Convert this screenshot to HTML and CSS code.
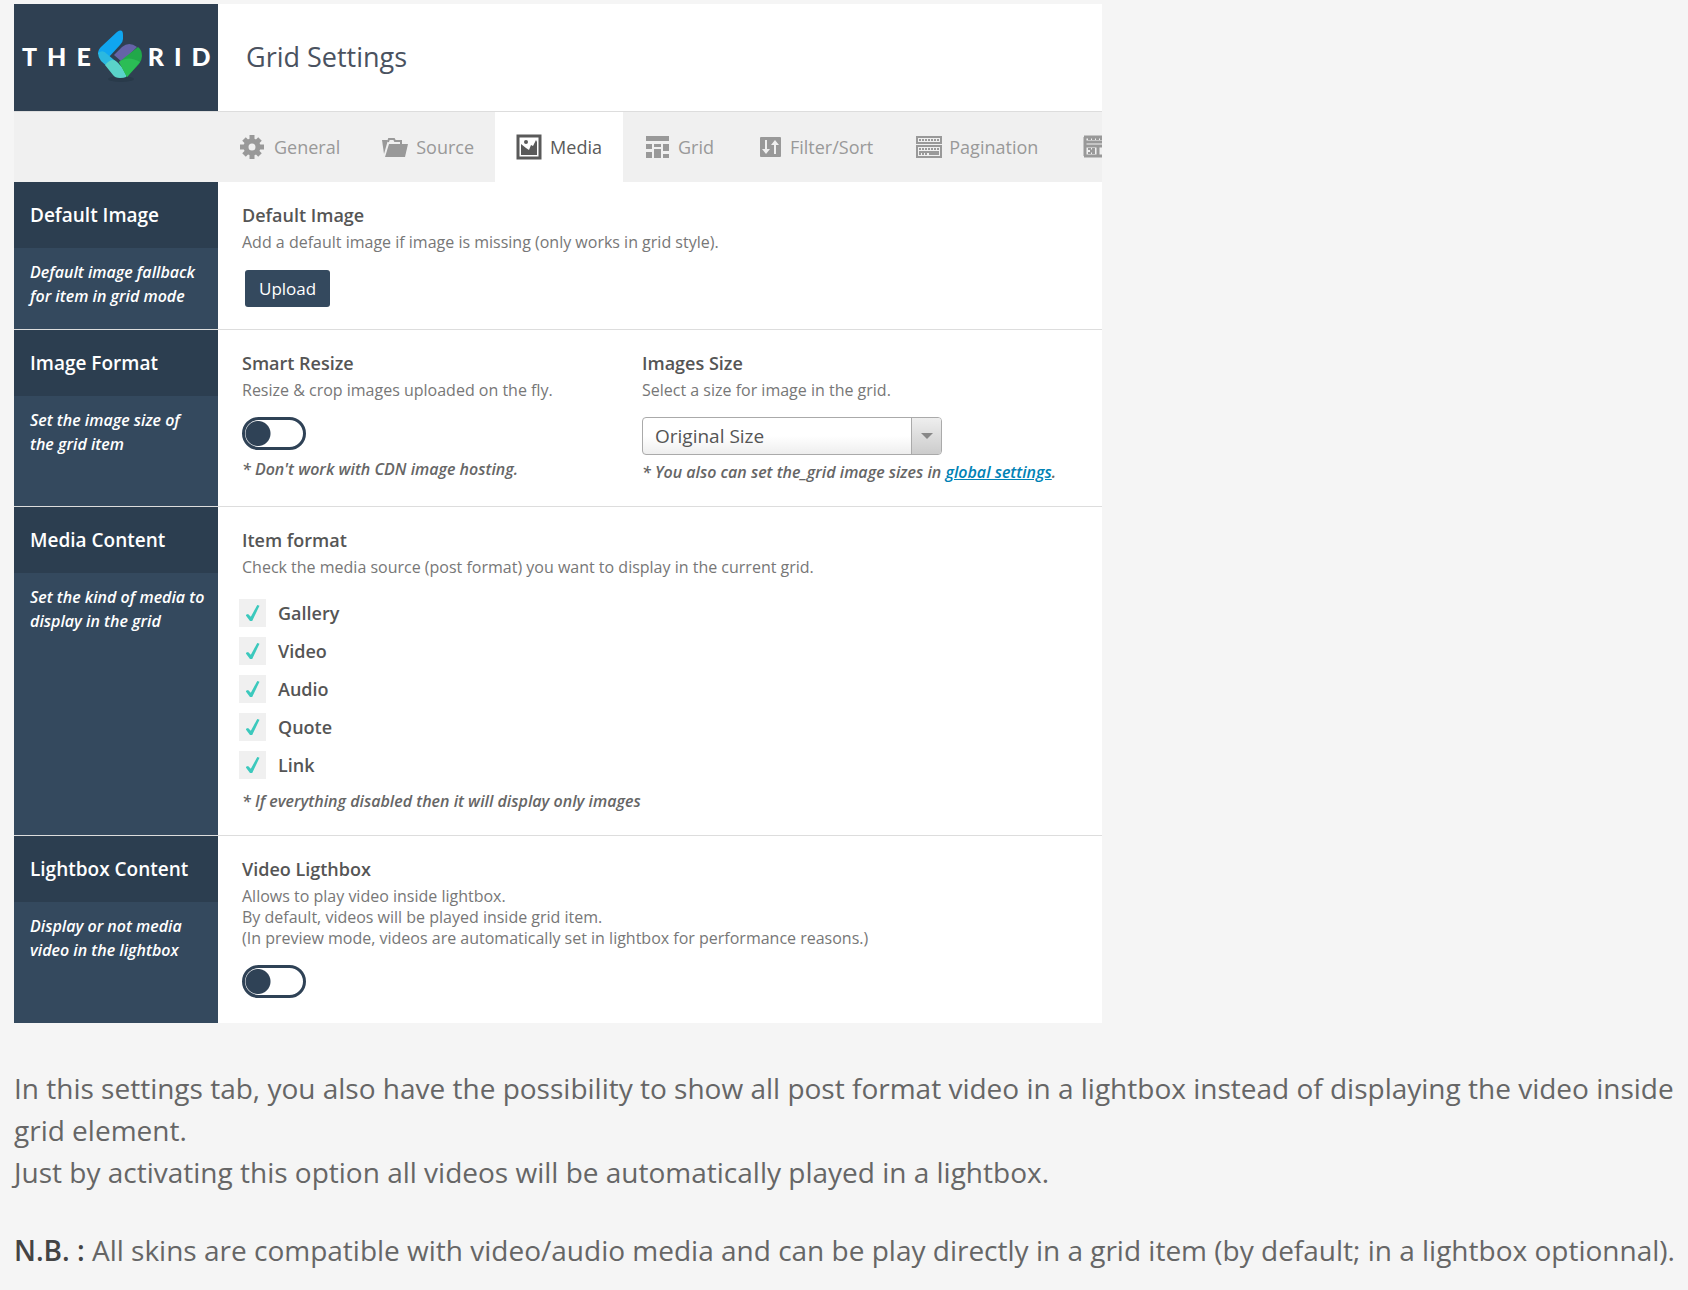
FILE: index.html
```html
<!DOCTYPE html>
<html lang="en">

<head>
    <meta charset="utf-8">
    <title>The Grid - Media settings</title>
    <link rel="stylesheet" href="styles.css">
</head>

<body>
    <main>
        <div class="panel">
            <header class="panel-header">
                <div class="logo">
                    <span class="word">THE</span>
                    <svg class="mark" viewBox="0 0 44 56" aria-hidden="true">
                        <ellipse cx="23" cy="51" rx="13" ry="3" fill="#293a4a" />
                        <path d="M19 4Q25 0 25 7V11Q25 14 22 17L11 29L0 26Q0 21 4 18Z" fill="#10a6f0" />
                        <path d="M0 25Q5 21 9 26L21 36L12 41L3 33Q0 29 0 25Z" fill="#2bb8e0" />
                        <path d="M7 37Q14 29 19 34L30 45L28 49Q26 50 22 50Q17 50 15 47Z" fill="#5ad3c9" />
                        <path d="M16 27L24 19Q31 13 39 19L24 34Z" fill="#6563a8" />
                        <path d="M21 34L40 19Q44 22 44 28Q44 32 41 36L29 49Z" fill="#21a84a" />
                        <path d="M21 34Q30 27 42 34L29 49Z" fill="#2bbd55" />
                    </svg>
                    <span class="word">RID</span>
                </div>
                <h1>Grid Settings</h1>
            </header>

            <nav class="tabs">
                <a class="tab" href="#general">
                    <svg viewBox="0 0 26 26"><circle cx="12" cy="13" r="6" fill="none" stroke="currentColor" stroke-width="5" /><path d="M12 1V6M12 20V25M0 13H5M19 13H24M4 5L7 8M17 18L20 21M4 21L7 18M17 8L20 5" stroke="currentColor" stroke-width="5" /></svg>
                    General
                </a>
                <a class="tab" href="#source">
                    <svg viewBox="0 0 26 26"><path d="M0 6H6L2 20Z" fill="currentColor" /><path d="M6 8L7 5H12L13 7H19V10" fill="none" stroke="currentColor" stroke-width="2" /><path d="M7 10H26L23 23H3Z" fill="currentColor" /></svg>
                    Source
                </a>
                <a class="tab active" href="#media">
                    <svg viewBox="0 0 26 26"><rect x="2" y="2" width="22" height="22" fill="none" stroke="currentColor" stroke-width="3" /><path d="M5 10L10 14L13 16L15 11L17 12L20 6L21 8V21H5Z" fill="currentColor" /><circle cx="10" cy="8" r="2" fill="currentColor" /></svg>
                    Media
                </a>
                <a class="tab" href="#grid">
                    <svg viewBox="0 0 26 26"><path d="M2 2H25V7H2ZM2 10H8V15H2ZM10 10H17V13H10ZM19 10H25V17H19ZM2 18H8V24H2ZM10 15H17V24H10ZM19 20H25V24H19Z" fill="currentColor" /></svg>
                    Grid
                </a>
                <a class="tab" href="#filter">
                    <svg viewBox="0 0 26 26"><rect x="4" y="3" width="21" height="20" rx="1" fill="currentColor" /><path d="M10 6V17M19 20V9" stroke="#f0f0f0" stroke-width="2" /><path d="M6 15H14L10 20ZM15 11H23L19 6Z" fill="#f0f0f0" /></svg>
                    Filter/Sort
                </a>
                <a class="tab" href="#pagination">
                    <svg viewBox="0 0 26 26"><path d="M2 3H26V9H2ZM2 12H26V23H2Z" fill="none" stroke="currentColor" stroke-width="2" /><path d="M4 6H24M4 15H24M4 20H12" stroke="currentColor" stroke-width="2" stroke-dasharray="2 1" /><path d="M4 18H24M14 20H24" stroke="currentColor" stroke-width="2" /></svg>
                    Pagination
                </a>
                <a class="tab" href="#skins" aria-label="Skins">
                    <svg viewBox="0 0 26 26"><path d="M4 3H26M4 8H26M4 12H26M4 22H26M5 3V22M18 12V22M10 17H15" fill="none" stroke="currentColor" stroke-width="3" /><path d="M8 5H26M8 15H16M8 19H16" stroke="currentColor" stroke-width="2" stroke-dasharray="3 1" /></svg>
                </a>
            </nav>

            <section class="row">
                <div class="side">
                    <h2>Default Image</h2>
                    <p>Default image fallback<br>for item in grid mode</p>
                </div>
                <div class="content">
                    <div class="field">
                        <h3>Default Image</h3>
                        <p class="desc">Add a default image if image is missing (only works in grid style).</p>
                        <button type="button" class="upload">Upload</button>
                    </div>
                </div>
            </section>

            <section class="row">
                <div class="side">
                    <h2>Image Format</h2>
                    <p>Set the image size of<br>the grid item</p>
                </div>
                <div class="content split">
                    <div class="field">
                        <h3><label for="resize">Smart Resize</label></h3>
                        <p class="desc">Resize &amp; crop images uploaded on the fly.</p>
                        <input type="checkbox" class="switch" id="resize">
                        <p class="note">* Don't work with CDN image hosting.</p>
                    </div>
                    <div class="field">
                        <h3><label for="size">Images Size</label></h3>
                        <p class="desc">Select a size for image in the grid.</p>
                        <div class="select">
                            <select id="size">
                                <option>Original Size</option>
                            </select>
                        </div>
                        <p class="note">* You also can set the_grid image sizes in <a href="#global">global settings</a>.</p>
                    </div>
                </div>
            </section>

            <section class="row">
                <div class="side">
                    <h2>Media Content</h2>
                    <p>Set the kind of media to<br>display in the grid</p>
                </div>
                <div class="content">
                    <div class="field">
                        <h3>Item format</h3>
                        <p class="desc">Check the media source (post format) you want to display in the current grid.</p>
                        <div class="checks">
                            <label><input type="checkbox" checked>Gallery</label>
                            <label><input type="checkbox" checked>Video</label>
                            <label><input type="checkbox" checked>Audio</label>
                            <label><input type="checkbox" checked>Quote</label>
                            <label><input type="checkbox" checked>Link</label>
                        </div>
                        <p class="note">* If everything disabled then it will display only images</p>
                    </div>
                </div>
            </section>

            <section class="row">
                <div class="side">
                    <h2>Lightbox Content</h2>
                    <p>Display or not media<br>video in the lightbox</p>
                </div>
                <div class="content">
                    <div class="field">
                        <h3><label for="lightbox">Video Ligthbox</label></h3>
                        <p class="desc">Allows to play video inside lightbox.<br>By default, videos will be played inside grid item.<br>(In preview mode, videos are automatically set in lightbox for performance reasons.)</p>
                        <input type="checkbox" class="switch" id="lightbox">
                    </div>
                </div>
            </section>
        </div>

        <div class="text">
            <p>In this settings tab, you also have the possibility to show all post format video in a lightbox instead of displaying the video inside grid element.<br>Just by activating this option all videos will be automatically played in a lightbox.</p>
            <p><strong>N.B. :</strong> All skins are compatible with video/audio media and can be play directly in a grid item (by default; in a lightbox optionnal).</p>
        </div>
    </main>
</body>

</html>
```
FILE: styles.css
```css
* {
    box-sizing: border-box;
}

body {
    margin: 0;
    background-color: #f5f5f5;
    color: #666;
    font-family: "Open Sans", "Noto Sans", sans-serif;
}

h1,
h2,
h3,
p {
    margin: 0;
}

main {
    padding: 4px 8px 12px 14px;
}

.panel {
    max-width: 1088px;
    background-color: #fff;
    overflow: hidden;
}

.panel-header {
    display: flex;
    height: 107px;
}

.logo {
    display: flex;
    align-items: center;
    flex: none;
    width: 204px;
    padding: 0 0 4px 8px;
    background-color: #2f4052;
}

.word {
    color: #fff;
    font-family: Lato, sans-serif;
    font-size: 25px;
    font-weight: 900;
    letter-spacing: 10px;
}

.mark {
    flex: none;
    width: 44px;
    height: 56px;
    margin: 0 6px 0 -3px;
}

h1 {
    padding-left: 28px;
    color: #4a5260;
    font-size: 27px;
    font-weight: 400;
    line-height: 105px;
}

.tabs {
    display: flex;
    height: 71px;
    padding-left: 205px;
    border-top: 1px solid #ddd;
    background-color: #f0f0f0;
}

.tab {
    display: flex;
    flex: none;
    align-items: center;
    gap: 8px;
    padding: 0 21px;
    color: #999;
    font-size: 18px;
    text-decoration: none;
}

.tab svg {
    width: 26px;
    height: 26px;
    overflow: visible;
}

.tab.active {
    background-color: #fff;
    color: #5a5a5a;
}

.row {
    display: flex;
    border-bottom: 1px solid #ddd;
}

.row:last-child {
    border-bottom: none;
}

.side {
    flex: none;
    width: 204px;
    background-color: #34495e;
    color: #fff;
}

.side h2 {
    padding: 20px 16px;
    background-color: #2c3e50;
    font-size: 19px;
    font-weight: 600;
    line-height: 26px;
}

.side p {
    padding: 12px 0 12px 16px;
    font-size: 16px;
    font-style: italic;
    font-weight: 600;
    line-height: 24px;
}

.content {
    flex: 1;
    padding: 20px 24px 22px;
}

.row:last-child .content {
    padding-bottom: 18px;
}

.split {
    display: flex;
}

.split .field:first-child {
    width: 400px;
}

h3 {
    color: #555;
    font-size: 18px;
    font-weight: 600;
    line-height: 26px;
}

.desc {
    padding: 4px 0;
    color: #777;
    font-size: 16px;
    line-height: 21px;
}

.upload {
    display: block;
    margin: 13px 3px 0;
    padding: 0 14px;
    border: none;
    border-radius: 3px;
    background-color: #34495e;
    color: #fff;
    font-family: inherit;
    font-size: 17px;
    line-height: 37px;
}

.switch {
    display: block;
    appearance: none;
    width: 64px;
    height: 33px;
    margin: 12px 0 7px;
    border: 3px solid #2f4256;
    border-radius: 17px;
    background: radial-gradient(circle at 13px 50%, #2f4256 12px, transparent 13px) #fff;
}

.select {
    position: relative;
    width: 300px;
    height: 38px;
    margin: 12px 0 5px;
}

.select select {
    appearance: none;
    width: 100%;
    height: 100%;
    padding: 0 12px;
    border: 1px solid #aaa;
    border-radius: 4px;
    background: linear-gradient(#fff 50%, #eee);
    color: #555;
    font-family: inherit;
    font-size: 19px;
}

.select::after {
    content: "";
    position: absolute;
    top: 1px;
    right: 1px;
    width: 29px;
    height: 36px;
    border-left: 1px solid #aaa;
    border-radius: 0 3px 3px 0;
    background: linear-gradient(#eee, #ccc);
    pointer-events: none;
}

.select::before {
    content: "";
    position: absolute;
    z-index: 1;
    top: 16px;
    right: 9px;
    border: 6px solid transparent;
    border-top-color: #888;
    border-bottom: none;
    pointer-events: none;
}

.note {
    color: #666;
    font-size: 16px;
    font-style: italic;
    font-weight: 600;
    line-height: 24px;
}

.note a {
    color: #0082b5;
}

.checks {
    margin: 12px 0 5px;
}

.checks label {
    display: flex;
    align-items: center;
    gap: 12px;
    height: 38px;
    margin-left: -3px;
    color: #555;
    font-size: 18px;
    font-weight: 600;
}

.checks input {
    appearance: none;
    display: grid;
    place-items: center;
    width: 27px;
    height: 28px;
    margin: 0;
    background-color: #f0f0f0;
}

.checks input:checked::before {
    content: "";
    width: 14px;
    height: 16px;
    background-color: #3cc9bd;
    clip-path: polygon(0 62%, 18% 56%, 38% 74%, 84% 0, 100% 5%, 48% 100%, 32% 100%);
}

.text {
    padding-top: 44px;
    font-size: 28px;
    line-height: 42px;
}

.text p + p {
    margin-top: 36px;
}

.text strong {
    color: #444;
    font-weight: 600;
}
```
